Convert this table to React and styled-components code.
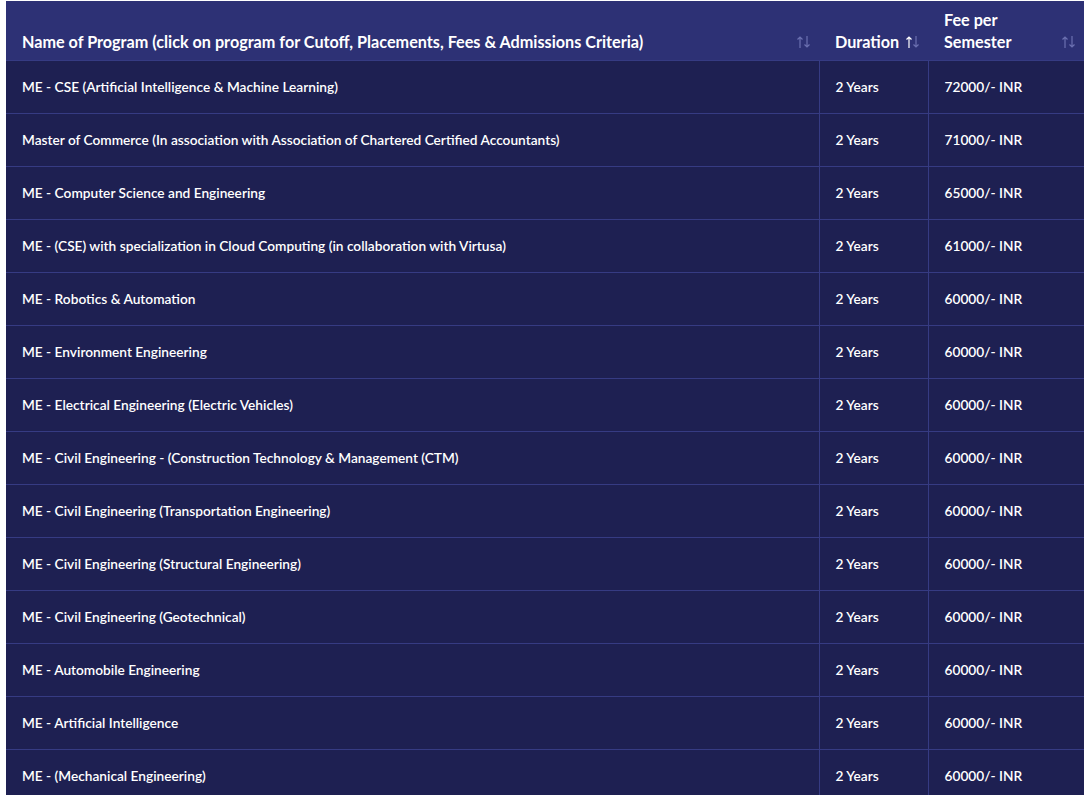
import React from "react";
import styled, { createGlobalStyle } from "styled-components";

const Global = createGlobalStyle`
  html, body { margin: 0; padding: 0; background: #ffffff; }
  body { font-family: "Lato", "Inter", sans-serif; }
`;

const Wrap = styled.div`
  padding: 1px 5px 0 6px;
`;

const Table = styled.table`
  width: 1078px;
  border-collapse: collapse;
  table-layout: fixed;
  color: #ffffff;
`;

const Th = styled.th`
  background: #2d3175;
  text-align: left;
  vertical-align: bottom;
  font-weight: 700;
  font-size: 16.2px;
  line-height: 22px;
  height: 59px;
  padding: 0 8px 7px 16px;
  box-sizing: border-box;
  width: ${(p) => p.$w};
`;

const HeadInner = styled.div`
  display: flex;
  align-items: flex-end;
  justify-content: ${(p) => (p.$inline ? "flex-start" : "space-between")};
  gap: 6px;
`;

const Sort = styled.span`
  display: inline-flex;
  align-items: center;
  height: 22px;
  flex-shrink: 0;
`;

const Td = styled.td`
  background: #1e2052;
  font-size: 13.7px;
  font-weight: 600;
  height: 53px;
  padding: 0 16px;
  box-sizing: border-box;
  border-top: 1px solid #363b83;
  border-left: ${(p) => (p.$first ? "none" : "1px solid #363b83")};
  white-space: nowrap;
`;

function SortIcon({ active }) {
  const dim = "#6b70b0";
  return (
    <svg width="15" height="14" viewBox="0 0 15 14" fill="none">
      <path d="M4 13V2M1.5 4.5L4 2l2.5 2.5" stroke={active ? "#ffffff" : dim} strokeWidth="1.2" />
      <path d="M11 1v11M8.5 9.5L11 12l2.5-2.5" stroke={dim} strokeWidth="1.2" />
    </svg>
  );
}

const rows = [
  ["ME - CSE (Artificial Intelligence & Machine Learning)", "72000/- INR"],
  ["Master of Commerce (In association with Association of Chartered Certified Accountants)", "71000/- INR"],
  ["ME - Computer Science and Engineering", "65000/- INR"],
  ["ME - (CSE) with specialization in Cloud Computing (in collaboration with Virtusa)", "61000/- INR"],
  ["ME - Robotics & Automation", "60000/- INR"],
  ["ME - Environment Engineering", "60000/- INR"],
  ["ME - Electrical Engineering (Electric Vehicles)", "60000/- INR"],
  ["ME - Civil Engineering - (Construction Technology & Management (CTM)", "60000/- INR"],
  ["ME - Civil Engineering (Transportation Engineering)", "60000/- INR"],
  ["ME - Civil Engineering (Structural Engineering)", "60000/- INR"],
  ["ME - Civil Engineering (Geotechnical)", "60000/- INR"],
  ["ME - Automobile Engineering", "60000/- INR"],
  ["ME - Artificial Intelligence", "60000/- INR"],
  ["ME - (Mechanical Engineering)", "60000/- INR"],
];

export default function App() {
  return (
    <>
      <Global />
      <Wrap>
        <Table>
          <thead>
            <tr>
              <Th $w="813px">
                <HeadInner>
                  <span>Name of Program (click on program for Cutoff, Placements, Fees &amp; Admissions Criteria)</span>
                  <Sort><SortIcon /></Sort>
                </HeadInner>
              </Th>
              <Th $w="109px">
                <HeadInner $inline>
                  <span>Duration</span>
                  <Sort><SortIcon active /></Sort>
                </HeadInner>
              </Th>
              <Th>
                <HeadInner>
                  <span>Fee per<br />Semester</span>
                  <Sort><SortIcon /></Sort>
                </HeadInner>
              </Th>
            </tr>
          </thead>
          <tbody>
            {rows.map(([name, fee], i) => (
              <tr key={i}>
                <Td $first>{name}</Td>
                <Td>2 Years</Td>
                <Td>{fee}</Td>
              </tr>
            ))}
          </tbody>
        </Table>
      </Wrap>
    </>
  );
}
